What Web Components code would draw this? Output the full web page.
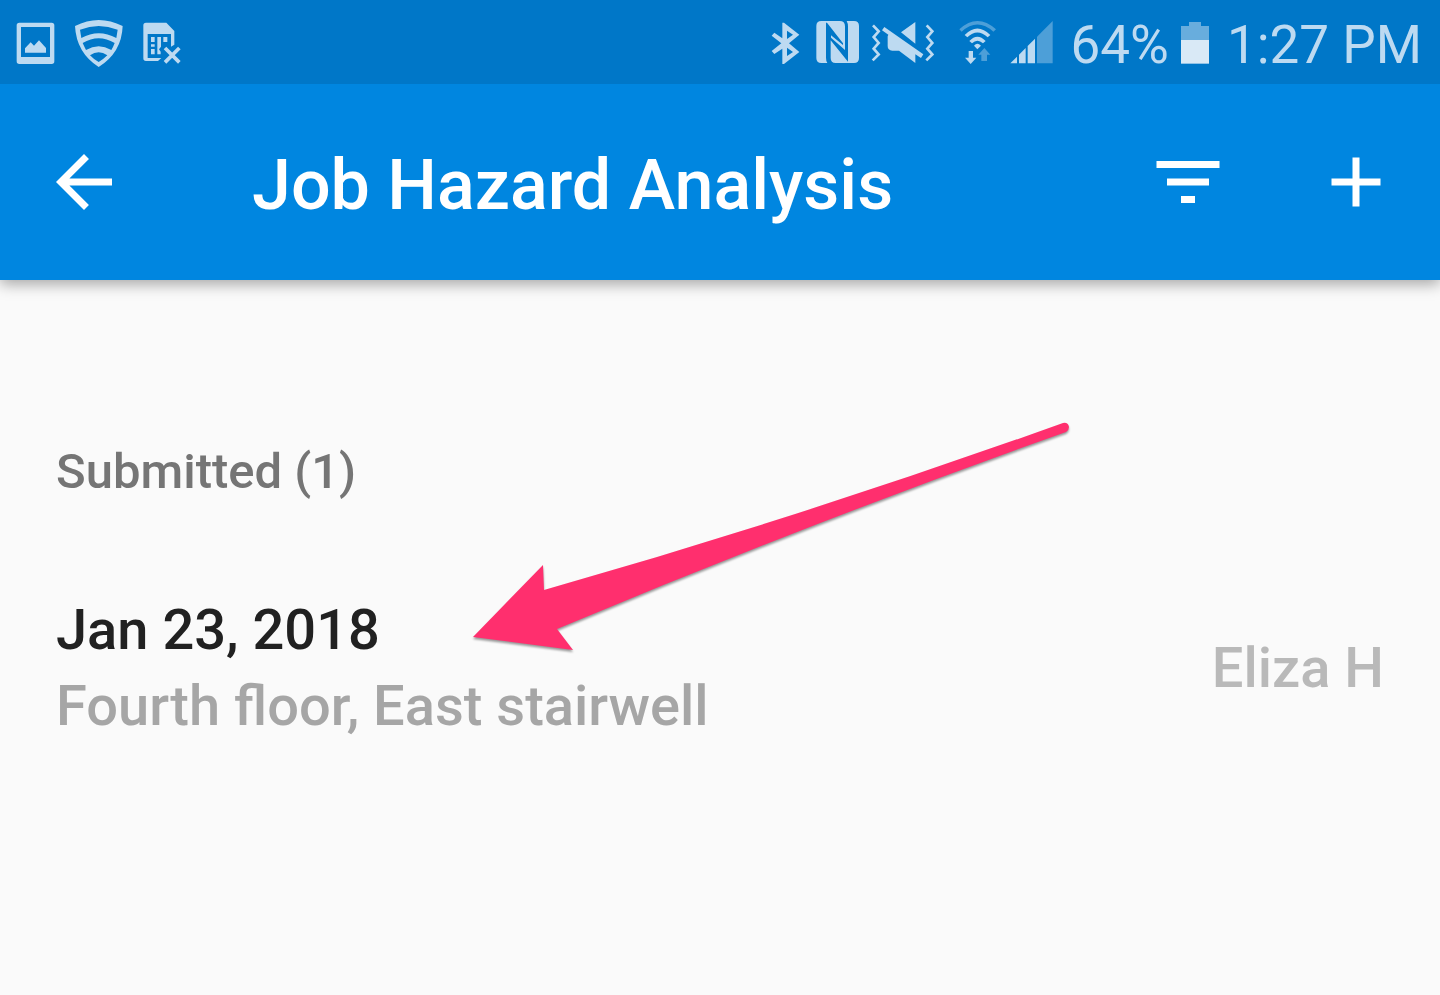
<!DOCTYPE html>
<html lang="en">
<head>
  <meta charset="utf-8">
  <meta name="viewport" content="width=device-width, initial-scale=1">
  <title>Job Hazard Analysis</title>
  <style>
    body {
      background-color: #fafafa;
      font-family: Roboto, sans-serif;
      margin: 0;
    }
  </style>
</head>
<body>
  <status-bar battery="64%" time="1:27 PM"></status-bar>
  <app-bar>Job Hazard Analysis</app-bar>
  <form-list heading="Submitted (1)">
    <form-item author="Eliza H">
      <span slot="date">Jan 23, 2018</span>
      <span slot="place">Fourth floor, East stairwell</span>
    </form-item>
    <pointer-arrow slot="note"></pointer-arrow>
  </form-list>

  <script>
    // status-bar
    class StatusBar extends HTMLElement {
      constructor(){
        super();
        const shadow = this.attachShadow({mode: 'open'});
        shadow.innerHTML = `
          <style>
            :host {
              align-items: center;
              background-color: #0077c8;
              box-sizing: border-box;
              color: #bddaf1;
              display: flex;
              font-size: 53px;
              height: 84px;
              justify-content: space-between;
              line-height: 62px;
              padding: 0 18px 0 16px;
              position: relative;
              z-index: 1;
            }

            .group {
              align-items: center;
              display: flex;
              gap: 16px;
            }

            .left {
              gap: 20px;
            }

            svg {
              display: block;
              fill: currentColor;
              height: 50px;
            }

            .faded {
              fill: #4d9fd8;
            }

            .line {
              fill: none;
              stroke: currentColor;
            }

            .mute {
              margin: 0 6px 0 -4px;
            }

            .wifi {
              margin-right: -2px;
            }

            .text {
              padding-top: 6px;
              white-space: nowrap;
            }

            .level {
              margin: 0 -4px 0 2px;
            }

            .time {
              margin-left: 2px;
            }
          </style>
          <div class="group left">
            <svg width="39" viewBox="48 51 117 150" aria-hidden="true">
              <path fill-rule="evenodd" d="M58 68H155Q163 68 163 76V184Q163 192 155 192H58Q50 192 50 184V76Q50 68 58 68ZM63 81V171H150V81Z"/>
              <path d="M75 158V145L92 127L102 137L117 121L138 144V158Z"/>
            </svg>
            <svg width="48" viewBox="224 51 144 150" aria-hidden="true">
              <path fill-rule="evenodd" d="M224 78Q295 42 367 78Q364 158 295 201Q228 158 224 78ZM239 89L243 114Q295 86 348 114L352 89Q295 67 239 89ZM247 129Q252 140 257 150Q295 128 333 150Q339 140 343 129Q295 101 247 129ZM269 166Q280 178 295 186Q309 178 321 166Q295 148 269 166Z"/>
            </svg>
            <svg width="38" viewBox="425 51 114 150" aria-hidden="true">
              <path d="M434 68H495L519 93V134L509 140V102H439V174H480L470 183H434Q426 183 426 175V76Q426 68 434 68Z"/>
              <path d="M449 111H460V126H449ZM449 133H460V140H449ZM449 147H460V163H449ZM468 111H479V140L473 148L478 155V163H468ZM486 111H498V126H486Z"/>
              <path class="line" stroke-width="11" d="M491 144L534 187M534 144L491 187"/>
            </svg>
          </div>
          <div class="group">
            <svg width="29" viewBox="32 51 87 150" aria-hidden="true">
              <path fill-rule="evenodd" d="M66 68H71L117 104L86 130L117 156L71 192H66V146L42 162L34 153L63 130L34 107L42 98L66 115ZM80 92V117L98 104ZM80 143V168L98 156Z"/>
            </svg>
            <svg width="43" viewBox="9 0 129 150" aria-hidden="true">
              <path d="M25 12H80Q96 12 96 28V99L54 62V55L90 84V79L42 17H39V122Q39 132 43 138H25Q10 138 10 123V27Q10 12 25 12Z"/>
              <path d="M53 70L105 134V29Q105 19 101 12H123Q138 12 138 27V123Q138 138 123 138H68Q53 138 53 123Z"/>
            </svg>
            <svg class="mute" width="66" viewBox="8 0 198 150" aria-hidden="true">
              <path class="line" stroke-width="8" d="M14 25L31 43L16 60L31 78L16 95L31 112L13 130M175 25L192 43L177 60L192 78L177 95L192 112L174 130"/>
              <path d="M48 30L165 112L158 123L141 112V138L92 101H72Q58 100 58 87V58L60 53L41 40ZM98 46L141 15V80Z"/>
            </svg>
            <svg class="wifi" width="37" viewBox="43 51 111 150" aria-hidden="true">
              <path class="faded" d="M44 88Q98 38 154 88L146 95Q98 52 51 95Z"/>
              <path d="M60 105Q98 66 137 105L129 112Q98 83 68 112ZM74 123Q98 97 123 123L115 130Q98 115 82 130ZM88 137Q98 126 109 137L98 148Z"/>
              <path d="M72 153H85V173H95L78 192L61 173H72Z"/>
              <path class="faded" d="M110 183V164H101L119 144L137 164H127V183Z"/>
            </svg>
            <svg width="43" viewBox="210 51 129 150" aria-hidden="true">
              <path d="M211 190L231 170V190ZM237 164L257 144V190H237ZM263 138L285 116V190H263Z"/>
              <path class="faded" d="M291 110L338 63V190H291Z"/>
            </svg>
            <span class="text level"></span>
            <svg width="28" viewBox="723 51 84 150" aria-hidden="true">
              <path fill="#68addd" d="M723 78H747V66H783V78H807V120H723Z"/>
              <path fill="#d9e9f6" d="M723 120H807V191H723Z"/>
            </svg>
            <span class="text time"></span>
          </div>
        `;
      }
      connectedCallback(){
        this.shadowRoot.querySelector('.level').textContent = this.getAttribute('battery');
        this.shadowRoot.querySelector('.time').textContent = this.getAttribute('time');
      }
    }

    customElements.define('status-bar', StatusBar);

    // app-bar
    class AppBar extends HTMLElement {
      constructor(){
        super();
        const shadow = this.attachShadow({mode: 'open'});
        shadow.innerHTML = `
          <style>
            :host {
              background-color: #0086e0;
              box-shadow: 0 4px 14px rgb(0,0,0,0.35);
              color: white;
              display: flex;
              height: 196px;
              position: relative;
            }

            button {
              align-items: center;
              background: none;
              border: none;
              color: inherit;
              cursor: pointer;
              display: flex;
              flex: none;
              justify-content: center;
              padding: 0;
              width: 168px;
            }

            h1 {
              align-self: center;
              flex: 1;
              font-size: 70px;
              font-weight: 500;
              line-height: 84px;
              margin: 0 0 0 84px;
              padding-top: 6px;
              white-space: nowrap;
            }

            svg {
              fill: currentColor;
              height: 84px;
              width: 84px;
            }
          </style>
          <button type="button" aria-label="Back">
            <svg viewBox="0 0 24 24"><path d="M20 11H7.83l5.59-5.59L12 4l-8 8 8 8 1.41-1.41L7.83 13H20v-2z"/></svg>
          </button>
          <h1><slot></slot></h1>
          <button type="button" aria-label="Filter">
            <svg viewBox="0 0 24 24"><path d="M10 18h4v-2h-4v2zM3 6v2h18V6H3zm3 7h12v-2H6v2z"/></svg>
          </button>
          <button type="button" aria-label="Add">
            <svg viewBox="0 0 24 24"><path d="M19 13h-6v6h-2v-6H5v-2h6V5h2v6h6v2z"/></svg>
          </button>
        `;
      }
    }

    customElements.define('app-bar', AppBar);

    // form-list
    class FormList extends HTMLElement {
      constructor(){
        super();
        const shadow = this.attachShadow({mode: 'open'});
        shadow.innerHTML = `
          <style>
            :host {
              display: block;
              padding: 162px 56px 56px;
              position: relative;
            }

            h2 {
              color: #757575;
              font-size: 49px;
              font-weight: 500;
              line-height: 60px;
              margin: 0 0 90px;
            }
          </style>
          <h2></h2>
          <slot></slot>
          <slot name="note"></slot>
        `;
      }
      connectedCallback(){
        this.shadowRoot.querySelector('h2').textContent = this.getAttribute('heading');
      }
    }

    customElements.define('form-list', FormList);

    // form-item
    class FormItem extends HTMLElement {
      constructor(){
        super();
        const shadow = this.attachShadow({mode: 'open'});
        shadow.innerHTML = `
          <style>
            :host {
              align-items: center;
              display: flex;
              font-size: 56px;
              font-weight: 500;
              gap: 56px;
              justify-content: space-between;
              line-height: 76px;
            }

            p {
              margin: 0;
            }

            .date {
              color: #212121;
            }

            .place {
              color: #a6a6a6;
            }

            .author {
              color: #b9b9b9;
              white-space: nowrap;
            }
          </style>
          <div>
            <p class="date"><slot name="date"></slot></p>
            <p class="place"><slot name="place"></slot></p>
          </div>
          <p class="author"></p>
        `;
      }
      connectedCallback(){
        this.shadowRoot.querySelector('.author').textContent = this.getAttribute('author');
      }
    }

    customElements.define('form-item', FormItem);

    // pointer-arrow, lies over the list and points at the first item
    class PointerArrow extends HTMLElement {
      constructor(){
        super();
        const shadow = this.attachShadow({mode: 'open'});
        shadow.innerHTML = `
          <style>
            :host {
              left: 470px;
              pointer-events: none;
              position: absolute;
              top: 140px;
            }

            svg {
              display: block;
              filter: drop-shadow(0px 2px 1px rgb(0,0,0,0.4));
              overflow: visible;
            }
          </style>
          <svg width="600" height="232" viewBox="470 420 600 232" aria-hidden="true">
            <path fill="#ff2f6e" d="M473 637L543 565L544 590Q804 516 1063 423Q1068 422 1069 427Q1069 430 1066 432Q812 522 557 629L573 650Z"/>
          </svg>
        `;
      }
    }

    customElements.define('pointer-arrow', PointerArrow);
  </script>
</body>
</html>
